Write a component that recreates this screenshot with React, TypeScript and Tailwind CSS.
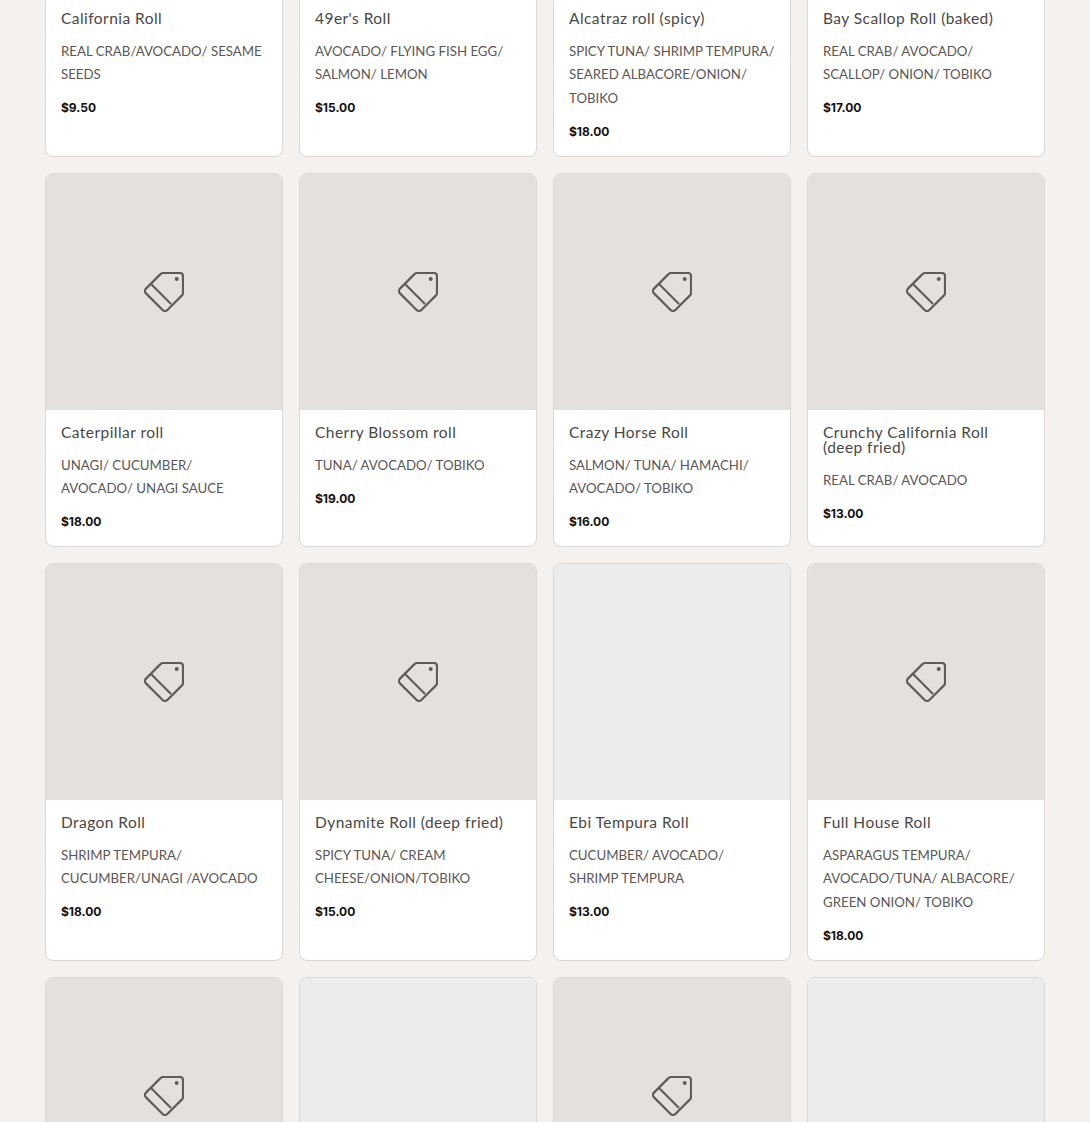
import React from 'react';

type Item = { name: string; desc: string; price: string; blank?: boolean };

const items: Item[] = [
  { name: 'California Roll', desc: 'REAL CRAB/AVOCADO/ SESAME SEEDS', price: '$9.50' },
  { name: "49er's Roll", desc: 'AVOCADO/ FLYING FISH EGG/ SALMON/ LEMON', price: '$15.00' },
  { name: 'Alcatraz roll (spicy)', desc: 'SPICY TUNA/ SHRIMP TEMPURA/ SEARED ALBACORE/ONION/ TOBIKO', price: '$18.00' },
  { name: 'Bay Scallop Roll (baked)', desc: 'REAL CRAB/ AVOCADO/ SCALLOP/ ONION/ TOBIKO', price: '$17.00' },
  { name: 'Caterpillar roll', desc: 'UNAGI/ CUCUMBER/\nAVOCADO/ UNAGI SAUCE', price: '$18.00' },
  { name: 'Cherry Blossom roll', desc: 'TUNA/ AVOCADO/ TOBIKO', price: '$19.00' },
  { name: 'Crazy Horse Roll', desc: 'SALMON/ TUNA/ HAMACHI/ AVOCADO/ TOBIKO', price: '$16.00' },
  { name: 'Crunchy California Roll (deep fried)', desc: 'REAL CRAB/ AVOCADO', price: '$13.00' },
  { name: 'Dragon Roll', desc: 'SHRIMP TEMPURA/ CUCUMBER/UNAGI /AVOCADO', price: '$18.00' },
  { name: 'Dynamite Roll (deep fried)', desc: 'SPICY TUNA/ CREAM CHEESE/ONION/TOBIKO', price: '$15.00' },
  { name: 'Ebi Tempura Roll', desc: 'CUCUMBER/ AVOCADO/\nSHRIMP TEMPURA', price: '$13.00', blank: true },
  { name: 'Full House Roll', desc: 'ASPARAGUS TEMPURA/ AVOCADO/TUNA/ ALBACORE/ GREEN ONION/ TOBIKO', price: '$18.00' },
  { name: 'Golden Gate Roll', desc: 'REAL CRAB/ AVOCADO', price: '$16.00' },
  { name: 'Hawaiian Roll', desc: 'TUNA/ AVOCADO', price: '$16.00', blank: true },
  { name: 'Lion King Roll', desc: 'REAL CRAB/ AVOCADO/ SALMON', price: '$17.00' },
  { name: 'Rainbow Roll', desc: 'REAL CRAB/ AVOCADO', price: '$17.00', blank: true },
];

const TagIcon = () => (
  <svg width="40" height="40" viewBox="0 0 40 40" fill="none" stroke="#5f5c5a" strokeWidth="2.2" strokeLinejoin="round">
    <path d="M16.2 2.4 2 16.6a3.4 3.4 0 0 0 0 4.8l16.6 16.6a3.4 3.4 0 0 0 4.8 0L38 23.4a3 3 0 0 0 1-2.2V4a3 3 0 0 0-3-3H19.4a4.6 4.6 0 0 0-3.2 1.4Z" />
    <path d="M7 12 27 32" />
    <circle cx="32.7" cy="7" r="2" fill="#5f5c5a" stroke="none" />
  </svg>
);

const Card = ({ item }: { item: Item }) => (
  <div className="flex flex-col overflow-hidden rounded-lg border border-[#dad7d4] bg-white">
    <div className={`flex h-[236px] items-center justify-center ${item.blank ? 'bg-[#ececec]' : 'bg-[#e4e0dd]'}`}>
      {!item.blank && <TagIcon />}
    </div>
    <div className="px-[15px] pt-[15px] pb-[14px]">
      <h3 className="text-[15.5px] leading-[15px] tracking-[0.45px] text-[#4a4745] font-['Lato',sans-serif]">{item.name}</h3>
      <p className="mt-[14px] whitespace-pre-line text-[13.25px] leading-[23.4px] text-[#5a5755] font-['Lato',sans-serif]">{item.desc}</p>
      <p className="mt-[11.5px] text-[12px] leading-5 font-bold text-[#111] font-['Inter',sans-serif]">{item.price}</p>
    </div>
  </div>
);

export default function App() {
  return (
    <div className="h-[1122px] overflow-hidden bg-[#f4f1ee]">
      <div className="-mt-[241px] grid grid-cols-4 gap-4 px-[45px]">
        {items.map(item => (
          <Card key={item.name} item={item} />
        ))}
      </div>
    </div>
  );
}
